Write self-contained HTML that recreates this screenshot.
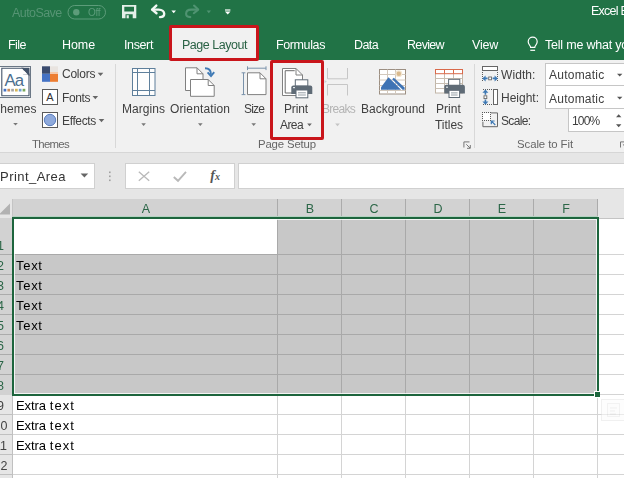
<!DOCTYPE html>
<html><head><meta charset="utf-8"><title>Excel</title>
<style>
html,body{margin:0;padding:0;background:#fff}
#root{position:relative;width:624px;height:478px;overflow:hidden;background:#fff;font-family:"Liberation Sans",sans-serif}
#root div,#root svg{position:absolute}
.t{white-space:nowrap;line-height:16px;height:16px}
.rn{left:-20px;width:41px;text-align:center;font-size:12.5px}
.t{will-change:transform}

</style></head><body>
<div id="root">
<!-- backgrounds -->
<div style="left:0;top:0;width:624px;height:60px;background:#217346"></div>
<div style="left:0;top:60px;width:624px;height:92px;background:#f1f1f1"></div>
<div style="left:0;top:152px;width:624px;height:1px;background:#d6d6d6"></div>
<div style="left:0;top:153px;width:624px;height:46px;background:#e6e6e6"></div>
<!-- page layout tab + red box -->
<div style="left:170px;top:27px;width:88px;height:33px;background:#f1f1f1"></div>
<div style="left:168.5px;top:24.5px;width:84.5px;height:30px;border:3px solid #c9151b;border-radius:2px;z-index:5"></div>
<!-- print area red box -->
<div style="left:270px;top:60px;width:48px;height:73.5px;border:3px solid #c9151b;border-radius:2px;z-index:5"></div>
<!-- ribbon separators -->
<div style="left:115px;top:64px;width:1px;height:84px;background:#d8d8d8"></div>
<div style="left:474px;top:64px;width:1px;height:84px;background:#d8d8d8"></div>
<!-- combo boxes -->
<div style="left:545px;top:63px;width:90px;height:21px;background:#fff;border:1px solid #c6c6c6"></div>
<div style="left:545px;top:85px;width:90px;height:22px;background:#fff;border:1px solid #c6c6c6"></div>
<div style="left:568px;top:108px;width:70px;height:22px;background:#fff;border:1px solid #c6c6c6"></div>
<!-- formula bar boxes -->
<div style="left:-2px;top:163px;width:95px;height:24px;background:#fff;border:1px solid #d0d0d0"></div>
<div style="left:125px;top:163px;width:108px;height:24px;background:#fff;border:1px solid #d0d0d0"></div>
<div style="left:238px;top:163px;width:400px;height:24px;background:#fff;border:1px solid #d0d0d0"></div>
<!-- grid -->
<div id="grid" style="left:0;top:199px;width:624px;height:279px;background:#fff"></div>
<!-- headers -->
<div style="left:0;top:199px;width:624px;height:19px;background:#e6e6e6"></div>
<div style="left:13px;top:199px;width:585px;height:19px;background:#d2d2d2"></div>
<div style="left:0;top:218px;width:13px;height:260px;background:#e6e6e6"></div>
<div style="left:0;top:218px;width:13px;height:177px;background:#d2d2d2"></div>
<div style="left:598px;top:218px;width:26px;height:1px;background:#c4c4c4"></div>
<!-- selection fill -->
<div style="left:13px;top:218px;width:585px;height:177px;background:#c8c8c8"></div>
<div style="left:14px;top:219px;width:263px;height:35px;background:#fff"></div>
<div style="left:277px;top:199px;width:1px;height:18px;background:#ababab"></div>
<div style="left:277px;top:219px;width:1px;height:176px;background:#a9a9a9"></div>
<div style="left:277px;top:396px;width:1px;height:82px;background:#d4d4d4"></div>
<div style="left:341px;top:199px;width:1px;height:18px;background:#ababab"></div>
<div style="left:341px;top:219px;width:1px;height:176px;background:#a9a9a9"></div>
<div style="left:341px;top:396px;width:1px;height:82px;background:#d4d4d4"></div>
<div style="left:405px;top:199px;width:1px;height:18px;background:#ababab"></div>
<div style="left:405px;top:219px;width:1px;height:176px;background:#a9a9a9"></div>
<div style="left:405px;top:396px;width:1px;height:82px;background:#d4d4d4"></div>
<div style="left:469px;top:199px;width:1px;height:18px;background:#ababab"></div>
<div style="left:469px;top:219px;width:1px;height:176px;background:#a9a9a9"></div>
<div style="left:469px;top:396px;width:1px;height:82px;background:#d4d4d4"></div>
<div style="left:533px;top:199px;width:1px;height:18px;background:#ababab"></div>
<div style="left:533px;top:219px;width:1px;height:176px;background:#a9a9a9"></div>
<div style="left:533px;top:396px;width:1px;height:82px;background:#d4d4d4"></div>
<div style="left:597px;top:199px;width:1px;height:18px;background:#ababab"></div>
<div style="left:597px;top:219px;width:1px;height:176px;background:#a9a9a9"></div>
<div style="left:597px;top:396px;width:1px;height:82px;background:#d4d4d4"></div>
<div style="left:12px;top:199px;width:1px;height:18px;background:#c4c4c4"></div>
<div style="left:14px;top:254px;width:583px;height:1px;background:#a9a9a9"></div>
<div style="left:0px;top:254px;width:12px;height:1px;background:#ababab"></div>
<div style="left:599px;top:254px;width:25px;height:1px;background:#d4d4d4"></div>
<div style="left:14px;top:274px;width:583px;height:1px;background:#a9a9a9"></div>
<div style="left:0px;top:274px;width:12px;height:1px;background:#ababab"></div>
<div style="left:599px;top:274px;width:25px;height:1px;background:#d4d4d4"></div>
<div style="left:14px;top:294px;width:583px;height:1px;background:#a9a9a9"></div>
<div style="left:0px;top:294px;width:12px;height:1px;background:#ababab"></div>
<div style="left:599px;top:294px;width:25px;height:1px;background:#d4d4d4"></div>
<div style="left:14px;top:314px;width:583px;height:1px;background:#a9a9a9"></div>
<div style="left:0px;top:314px;width:12px;height:1px;background:#ababab"></div>
<div style="left:599px;top:314px;width:25px;height:1px;background:#d4d4d4"></div>
<div style="left:14px;top:334px;width:583px;height:1px;background:#a9a9a9"></div>
<div style="left:0px;top:334px;width:12px;height:1px;background:#ababab"></div>
<div style="left:599px;top:334px;width:25px;height:1px;background:#d4d4d4"></div>
<div style="left:14px;top:354px;width:583px;height:1px;background:#a9a9a9"></div>
<div style="left:0px;top:354px;width:12px;height:1px;background:#ababab"></div>
<div style="left:599px;top:354px;width:25px;height:1px;background:#d4d4d4"></div>
<div style="left:14px;top:374px;width:583px;height:1px;background:#a9a9a9"></div>
<div style="left:0px;top:374px;width:12px;height:1px;background:#ababab"></div>
<div style="left:599px;top:374px;width:25px;height:1px;background:#d4d4d4"></div>
<div style="left:13px;top:414px;width:611px;height:1px;background:#d4d4d4"></div>
<div style="left:0px;top:414px;width:12px;height:1px;background:#c0c0c0"></div>
<div style="left:13px;top:434px;width:611px;height:1px;background:#d4d4d4"></div>
<div style="left:0px;top:434px;width:12px;height:1px;background:#c0c0c0"></div>
<div style="left:13px;top:454px;width:611px;height:1px;background:#d4d4d4"></div>
<div style="left:0px;top:454px;width:12px;height:1px;background:#c0c0c0"></div>
<div style="left:13px;top:474px;width:611px;height:1px;background:#d4d4d4"></div>
<div style="left:0px;top:474px;width:12px;height:1px;background:#c0c0c0"></div>
<div style="left:12px;top:395px;width:1px;height:83px;background:#c0c0c0"></div>
<div style="left:14px;top:219px;width:581px;height:173px;border:1px solid rgba(255,255,255,0.8)"></div>
<div style="left:13px;top:216px;width:585px;height:1px;background:#b4d3c1"></div>
<div style="left:12px;top:217px;width:587px;height:2px;background:#1d653d"></div>
<div style="left:12px;top:217px;width:2px;height:179px;background:#1d653d"></div>
<div style="left:597px;top:217px;width:2px;height:176px;background:#1d653d"></div>
<div style="left:12px;top:394px;width:583px;height:2px;background:#1d653d"></div>
<div style="left:594px;top:391px;width:5px;height:5px;background:#1d653d;border:1px solid #fff"></div>
<svg style="left:0;top:199px" width="13" height="19"><polygon points="10,4.5 10,15.5 -1,15.5" fill="#b2b2b2"/></svg>
<div style="left:600px;top:394px;width:24px;height:1px;background:#d4d4d4"></div>
<svg id="icons" style="left:0;top:0" width="624" height="478" viewBox="0 0 624 478">
<!-- title bar: autosave toggle -->
<rect x="68" y="5.5" width="37.5" height="13.5" rx="6.75" fill="none" stroke="#5d9c7a" stroke-width="1"/>
<circle cx="76.3" cy="12.2" r="3.2" fill="#5d9c7a"/>
<!-- save icon -->
<g fill="#e4f0e9">
<path d="M122 5h14.3v13.3h-14.3z M124.3 6.8v4.6h9.7v-4.6z M125.5 14.2v4.1h7.2v-4.1z" fill-rule="evenodd"/>
<rect x="126.6" y="15.2" width="2.2" height="3.1" fill="#e4f0e9"/>
</g>
<!-- undo -->
<g fill="none" stroke="#f2f8f4" stroke-width="2.4" stroke-linecap="round" stroke-linejoin="round">
<path d="M152.5 9.6h6.2c3.4 0 5.5 1.9 5.5 4.2s-1.8 3.3-4.2 3.3"/>
<path d="M156.3 5.6l-4.2 4 4.4 3.6"/>
</g>
<polygon points="171.4,10.4 176,10.4 173.7,13.2" fill="#fff"/>
<!-- redo dim -->
<g fill="none" stroke="#4f9371" stroke-width="2.1" stroke-linecap="round" stroke-linejoin="round">
<path d="M197.5 9.6h-6.2c-3.4 0-5.2 1.9-5.2 4.2s1.8 3.3 4.2 3.3"/>
<path d="M194 5.6l4.2 4-4.4 3.6"/>
</g>
<polygon points="206.6,10.4 211,10.4 208.8,13.2" fill="#4f9371"/>
<!-- customize qat -->
<rect x="225" y="9.4" width="5.4" height="1.2" fill="#fff"/>
<polygon points="224.9,11.6 230.5,11.6 227.7,14.5" fill="#fff"/>
<!-- bulb -->
<g fill="none" stroke="#fff" stroke-width="1.2">
<path d="M530.6 47.3c0-1.6-2.4-2.9-2.4-5.6a4.5 4.5 0 0 1 9 0c0 2.7-2.4 4-2.4 5.600z"/>
<path d="M530.3 50.300h4.800"/>
</g>

<!-- THEMES icon -->
<rect x="-0.5" y="66.5" width="31" height="31" fill="#fff" stroke="#6b7785" stroke-width="1"/>
<path d="M1.8 68.3h21.4l5.8 5.8v21.7h-27.2z" fill="#fff" stroke="#44546a" stroke-width="1.1"/>
<path d="M23.2 68.3l5.8 5.8h-5.8z" fill="#fff" stroke="#44546a" stroke-width="0.9"/>
<path d="M21 67.8h8.5v8.5z" fill="#44546a"/>
<path d="M21.8 68.6v5.9h5.9z" fill="#fff"/>
<text x="4.4" y="86" font-family="Liberation Sans, sans-serif" font-size="16.8" fill="#4b6f8f" letter-spacing="-0.9">Aa</text>
<g>
<rect x="3.6" y="88.8" width="2.7" height="2.7" fill="#4472c4"/>
<rect x="7.4" y="88.8" width="2.7" height="2.7" fill="#c98a5a"/>
<rect x="11.2" y="88.8" width="2.7" height="2.7" fill="#a5a5a5"/>
<rect x="15" y="88.8" width="2.7" height="2.7" fill="#d6b656"/>
<rect x="18.8" y="88.8" width="2.7" height="2.7" fill="#6fa0cf"/>
<rect x="22.6" y="88.8" width="2.7" height="2.7" fill="#78a85a"/>
</g>
<polygon points="13.2,122.9 17.8,122.9 15.5,125.6" fill="#777"/>
<!-- colors icon -->
<rect x="42" y="66.3" width="8" height="7.5" fill="#3a4b6e"/>
<rect x="50" y="66.3" width="8" height="7.5" fill="#e9e4e0"/>
<rect x="42" y="73.8" width="8" height="8" fill="#4472c4"/>
<rect x="50" y="73.8" width="8" height="8" fill="#ed7d31"/>
<rect x="50" y="72" width="8" height="1.8" fill="#f6c9a8"/>
<!-- fonts icon -->
<rect x="42.5" y="89.5" width="15" height="15" fill="#fff" stroke="#5a5a5a"/>
<text x="50" y="101.2" text-anchor="middle" font-family="Liberation Sans, sans-serif" font-size="11" fill="#333">A</text>
<!-- effects icon -->
<rect x="42.5" y="112.5" width="15" height="15" fill="#fff" stroke="#5a5a5a"/>
<circle cx="50" cy="120" r="5.7" fill="#8faadc" stroke="#4f74b8" stroke-width="0.9"/>
<!-- small arrows colors/fonts/effects -->
<polygon points="97.7,72.8 103.3,72.8 100.5,76.1" fill="#666"/>
<polygon points="92.5,96 98.1,96 95.3,99.3" fill="#666"/>
<polygon points="98.7,118.9 104.3,118.9 101.5,122.2" fill="#666"/>

<!-- MARGINS icon -->
<g fill="none" stroke="#5e7f9b" stroke-width="1">
<rect x="132.5" y="68.5" width="22.5" height="27" fill="#fdfdfd"/>
<path d="M137.5 68.5v27M149.5 68.5v27M132.5 72.5h22.5M132.5 90.5h22.5"/>
</g>
<polygon points="141.3,123.3 145.9,123.3 143.6,126" fill="#777"/>
<!-- ORIENTATION icon -->
<g fill="#fff" stroke="#808080" stroke-width="1">
<path d="M185.5 67.8h11.5l6 6v16.7h-17.5z"/>
<path d="M197 67.8v6h6" fill="none"/>
<path d="M190.5 79.5h17.7l6 6v10.8h-23.7z"/>
<path d="M208.2 79.5v6h6" fill="none"/>
</g>
<g fill="none" stroke="#3f7ab5" stroke-width="1.9">
<path d="M205 68.2c4.2 0 6 2.4 6 6.2"/>
<path d="M207.6 72.4l3.4 3.6 3.2-3.8"/>
</g>
<polygon points="198,123.3 202.6,123.3 200.3,126" fill="#777"/>
<!-- SIZE icon -->
<g fill="#fff" stroke="#808080" stroke-width="1">
<path d="M247.5 72.8h12.5l6 6v15.8h-18.5z"/>
<path d="M260 72.8v6h6" fill="none"/>
</g>
<g fill="none" stroke="#7a92aa" stroke-width="1">
<path d="M247.5 68.2h18.5M247.5 66.3v3.8M266 66.3v3.8"/>
<path d="M243.5 72.8v22M241.6 72.8h3.8M241.6 94.6h3.8"/>
</g>
<polygon points="251.4,123.3 256,123.3 253.7,126" fill="#777"/>
<!-- PRINT AREA icon -->
<g fill="#fff" stroke="#808080" stroke-width="1">
<path d="M282.5 68.5h13.5l6.5 6.5v20.5h-20z"/>
<path d="M296 68.5v6.5h6.5" fill="none"/>
<path d="M292 93h-6.8v-22.3h9.5" fill="none" stroke="#6a6a6a"/>
</g>
<g>
<rect x="295.3" y="79.8" width="12.5" height="6.4" fill="#fff" stroke="#5f6b76" stroke-width="1"/>
<path d="M291.3 87.5a2 2 0 0 1 2-2h17a2 2 0 0 1 2 2v6.5h-21z" fill="#5f6b76"/>
<rect x="296" y="90" width="11.8" height="7.8" fill="#fff" stroke="#5f6b76" stroke-width="1"/>
<path d="M298 92.8h7.8M298 95h7.8" stroke="#8a949c" stroke-width="0.9"/>
<rect x="293" y="87" width="2" height="1.2" fill="#dfe4e8"/>
</g>
<polygon points="307.2,123.5 311.8,123.5 309.5,126.2" fill="#666"/>
<!-- BREAKS icon (dim) -->
<g fill="none" stroke="#c6c6c6" stroke-width="1">
<path d="M327.5 68v10.8h20v-10.8"/>
<path d="M327.5 95.5v-11h20v11"/>
</g>
<polygon points="324.5,80 326.8,81.6 324.5,83.2" fill="#c9cfd6"/>
<polygon points="335.2,123.5 339.8,123.5 337.5,126.2" fill="#c4c4c4"/>
<!-- BACKGROUND icon -->
<g>
<rect x="379.500" y="69.5" width="26" height="24.5" fill="#fff" stroke="#9c8f82" stroke-width="1"/>
<path d="M387.5 69.5v24.5M395.5 69.5v24.5M379.5 74.500h26M379.5 80h26M379.5 85.500h26M379.5 90.500h26" stroke="#d2c8bc" stroke-width="1" fill="none"/>
<circle cx="398.8" cy="73.700" r="3.400" fill="#f3e6d2"/>
<circle cx="398.8" cy="73.700" r="2.200" fill="#d9b98c"/>
<path d="M381 89.700v-2.400l7.500-10.100 12.600 12.500z" fill="#3f74b5"/>
<path d="M392.200 79.300l1.600-1.500 10.800 9.800v2.100h-2z" fill="#3f74b5"/>
</g>
<!-- PRINT TITLES icon -->
<g>
<rect x="435.5" y="69.5" width="27" height="23.5" fill="#fff" stroke="#c2b6a8" stroke-width="1"/>
<path d="M444.5 69.5v23.5M453.5 69.5v23.5M435.5 78.500h27M435.5 83.500h27M435.5 88.500h27" stroke="#c9bfb3" stroke-width="1" fill="none"/>
<rect x="435.5" y="69.5" width="27" height="4.200" fill="#fff" stroke="#d9694a" stroke-width="1"/>
<path d="M444.5 69.5v4.200M453.5 69.5v4.200" stroke="#d9694a" stroke-width="1"/>
<rect x="448.6" y="79.300" width="11.2" height="6.800" fill="#fff" stroke="#5f6b76" stroke-width="1"/>
<path d="M444.300 86.800a2 2 0 0 1 2-2h16.600a2 2 0 0 1 2 2v6.600h-20.600z" fill="#5f6b76"/>
<rect x="449" y="90.300" width="10.600" height="7.200" fill="#fff" stroke="#5f6b76" stroke-width="1"/>
<path d="M451 92.900h6.600M451 95h6.600" stroke="#8a949c" stroke-width="0.9"/>
<rect x="446" y="86.600" width="2" height="1.200" fill="#dfe4e8"/>
</g>
<!-- dialog launchers -->
<g fill="none" stroke="#777" stroke-width="1">
<path d="M463.9 147.5v-5.6h5.6"/>
<path d="M466.3 144.3l3.7 3.7M470.3 145v3.3h-3.3"/>
</g>
<g fill="none" stroke="#777" stroke-width="1">
<path d="M620.5 147.5v-5.6h5.6"/>
<path d="M622.9 144.3l3.7 3.7"/>
</g>
<!-- WIDTH icon -->
<rect x="482.5" y="66.5" width="15" height="4" fill="#fff" stroke="#666"/>
<rect x="482" y="72" width="1" height="1" fill="#5a5a5a"/><rect x="482" y="74" width="1" height="1" fill="#5a5a5a"/><rect x="482" y="76" width="1" height="1" fill="#5a5a5a"/><rect x="482" y="78" width="1" height="1" fill="#5a5a5a"/><rect x="482" y="80" width="1" height="1" fill="#5a5a5a"/><rect x="497" y="72" width="1" height="1" fill="#5a5a5a"/><rect x="497" y="74" width="1" height="1" fill="#5a5a5a"/><rect x="497" y="76" width="1" height="1" fill="#5a5a5a"/><rect x="497" y="78" width="1" height="1" fill="#5a5a5a"/><rect x="497" y="80" width="1" height="1" fill="#5a5a5a"/>
<g fill="#3f7ab5">
<polygon points="482.3,78.4 485.6,75.4 485.6,77.6 487.6,77.6 487.6,79.2 485.6,79.2 485.6,81.4"/>
<polygon points="497.9,78.4 494.6,75.4 494.6,77.6 492.6,77.6 492.6,79.2 494.6,79.2 494.6,81.4"/>
</g>
<rect x="488.7" y="77" width="2.8" height="2.8" fill="#fff" stroke="#666" stroke-width="0.9"/>
<!-- HEIGHT icon -->
<rect x="493.5" y="89.5" width="4" height="15" fill="#fff" stroke="#666"/>
<rect x="483" y="89" width="1" height="1" fill="#5a5a5a"/><rect x="485" y="89" width="1" height="1" fill="#5a5a5a"/><rect x="487" y="89" width="1" height="1" fill="#5a5a5a"/><rect x="489" y="89" width="1" height="1" fill="#5a5a5a"/><rect x="491" y="89" width="1" height="1" fill="#5a5a5a"/><rect x="483" y="104" width="1" height="1" fill="#5a5a5a"/><rect x="485" y="104" width="1" height="1" fill="#5a5a5a"/><rect x="487" y="104" width="1" height="1" fill="#5a5a5a"/><rect x="489" y="104" width="1" height="1" fill="#5a5a5a"/><rect x="491" y="104" width="1" height="1" fill="#5a5a5a"/>
<g fill="#3f7ab5">
<polygon points="485.4,89.4 482.4,92.7 484.6,92.7 484.6,94.7 486.2,94.7 486.2,92.7 488.4,92.7"/>
<polygon points="485.4,104.8 482.4,101.5 484.6,101.5 484.6,99.5 486.2,99.5 486.2,101.5 488.4,101.5"/>
</g>
<rect x="484" y="95.8" width="2.8" height="2.8" fill="#fff" stroke="#666" stroke-width="0.9"/>
<!-- SCALE icon -->
<path d="M491 112.9h6.5v13.8h-14.6v-5" fill="none" stroke="#666" stroke-width="1"/>
<rect x="483" y="113" width="7" height="7" fill="#fff"/><rect x="482" y="112" width="1" height="1" fill="#5a5a5a"/><rect x="484" y="112" width="1" height="1" fill="#5a5a5a"/><rect x="486" y="112" width="1" height="1" fill="#5a5a5a"/><rect x="488" y="112" width="1" height="1" fill="#5a5a5a"/><rect x="490" y="112" width="1" height="1" fill="#5a5a5a"/><rect x="482" y="120" width="1" height="1" fill="#5a5a5a"/><rect x="484" y="120" width="1" height="1" fill="#5a5a5a"/><rect x="486" y="120" width="1" height="1" fill="#5a5a5a"/><rect x="488" y="120" width="1" height="1" fill="#5a5a5a"/><rect x="490" y="120" width="1" height="1" fill="#5a5a5a"/><rect x="482" y="114" width="1" height="1" fill="#5a5a5a"/><rect x="482" y="116" width="1" height="1" fill="#5a5a5a"/><rect x="482" y="118" width="1" height="1" fill="#5a5a5a"/><rect x="490" y="114" width="1" height="1" fill="#5a5a5a"/><rect x="490" y="116" width="1" height="1" fill="#5a5a5a"/><rect x="490" y="118" width="1" height="1" fill="#5a5a5a"/>
<g stroke="#3f7ab5" stroke-width="1.2" fill="none">
<path d="M495.3 125l-3.6-3.6M491.3 124.3v-3.3h3.3"/>
</g>
<!-- combo arrows -->
<polygon points="617,73.8 622.4,73.8 619.7,76.6" fill="#555"/>
<polygon points="617,96.8 622.4,96.8 619.7,99.6" fill="#555"/>
<polygon points="616,117.2 621.4,117.2 618.7,114.2" fill="#555"/>
<polygon points="616,124.3 621.4,124.3 618.7,127.2" fill="#555"/>
<!-- name box arrow -->
<polygon points="80.6,173.4 88.2,173.4 84.4,177.4" fill="#666"/>
<!-- dots -->
<g fill="#a0a0a0">
<rect x="109" y="171.5" width="1.6" height="1.6"/>
<rect x="109" y="175.5" width="1.6" height="1.6"/>
<rect x="109" y="179.5" width="1.6" height="1.6"/>
</g>
<!-- X / check -->
<path d="M138.8 171.8l10.4 9M149.2 171.8l-10.4 9" stroke="#b9b9b9" stroke-width="1.3" fill="none"/>
<path d="M173.8 177l4.2 3.8 8-9" stroke="#b9b9b9" stroke-width="1.9" fill="none"/>
<text x="210.3" y="180" font-family="Liberation Serif, serif" font-style="italic" font-weight="bold" font-size="14" fill="#555">f</text>
<text x="215" y="180.3" font-family="Liberation Serif, serif" font-style="italic" font-weight="bold" font-size="10" fill="#555">x</text>
<!-- quick analysis faint -->
<g opacity="0.55">
<rect x="601.5" y="399.5" width="24" height="21" fill="#fcfcfc" stroke="#e4e4e4"/>
<rect x="607.5" y="403.5" width="12" height="13" fill="#fafafa" stroke="#e9e9e9"/>
<path d="M610 408h7M610 411h5M610 414h6" stroke="#e3e3e3" stroke-width="1"/>
</g>
</svg>

<div class="t" id="t0" style="left:11.5px;top:5.0px;color:#569474;font-size:12.5px;letter-spacing:-0.565px">AutoSave</div>
<div class="t" id="t1" style="left:87.5px;top:4.5px;color:#5c9c7b;font-size:10px;letter-spacing:-0.285px">Off</div>
<div class="t" id="t2" style="left:591px;top:3.0px;color:#fff;font-size:12.5px;letter-spacing:-0.770px">Excel B</div>
<div class="t" id="t3" style="left:8px;top:37.0px;color:#fff;font-size:12.5px;letter-spacing:-0.539px">File</div>
<div class="t" id="t4" style="left:62px;top:37.0px;color:#fff;font-size:12.5px;letter-spacing:-0.086px">Home</div>
<div class="t" id="t5" style="left:124px;top:37.0px;color:#fff;font-size:12.5px;letter-spacing:-0.378px">Insert</div>
<div class="t" id="t6" style="left:276px;top:37.0px;color:#fff;font-size:12.5px;letter-spacing:-0.387px">Formulas</div>
<div class="t" id="t7" style="left:354px;top:37.0px;color:#fff;font-size:12.5px;letter-spacing:-0.602px">Data</div>
<div class="t" id="t8" style="left:407px;top:37.0px;color:#fff;font-size:12.5px;letter-spacing:-0.667px">Review</div>
<div class="t" id="t9" style="left:472px;top:37.0px;color:#fff;font-size:12.5px;letter-spacing:-0.219px">View</div>
<div class="t" id="t10" style="left:182px;top:37.0px;color:#2a6245;font-size:12.5px;letter-spacing:-0.473px">Page Layout</div>
<div class="t" id="t11" style="left:545px;top:37.0px;color:#fff;font-size:12.5px;letter-spacing:-0.210px">Tell me what you want to do</div>
<div class="t" id="t12" style="left:-7.4px;top:100.5px;color:#404040;font-size:12px;letter-spacing:0.007px">Themes</div>
<div class="t" id="t13" style="left:61.6px;top:66.3px;color:#404040;font-size:12px;letter-spacing:-0.248px">Colors</div>
<div class="t" id="t14" style="left:61.6px;top:89.5px;color:#404040;font-size:12px;letter-spacing:-0.383px">Fonts</div>
<div class="t" id="t15" style="left:61.6px;top:112.5px;color:#404040;font-size:12px;letter-spacing:-0.367px">Effects</div>
<div class="t" id="t16" style="left:32px;top:135.9px;color:#666;font-size:11.4px;letter-spacing:-0.693px">Themes</div>
<div class="t" id="t17" style="left:122px;top:100.5px;color:#404040;font-size:12px;letter-spacing:0.045px">Margins</div>
<div class="t" id="t18" style="left:170px;top:100.5px;color:#404040;font-size:12px;letter-spacing:0.118px">Orientation</div>
<div class="t" id="t19" style="left:244px;top:100.5px;color:#404040;font-size:12px;letter-spacing:-0.836px">Size</div>
<div class="t" id="t20" style="left:284px;top:100.5px;color:#404040;font-size:12px;letter-spacing:-0.138px">Print</div>
<div class="t" id="t21" style="left:280px;top:116.7px;color:#404040;font-size:12px;letter-spacing:-0.590px">Area</div>
<div class="t" id="t22" style="left:322px;top:100.5px;color:#b4b4b4;font-size:12px;letter-spacing:-0.727px">Breaks</div>
<div class="t" id="t23" style="left:361px;top:100.5px;color:#404040;font-size:12px;letter-spacing:-0.005px">Background</div>
<div class="t" id="t24" style="left:436px;top:100.5px;color:#404040;font-size:12px;letter-spacing:0.062px">Print</div>
<div class="t" id="t25" style="left:435px;top:116.7px;color:#404040;font-size:12px;letter-spacing:-0.039px">Titles</div>
<div class="t" id="t26" style="left:258px;top:135.9px;color:#666;font-size:11.4px;letter-spacing:-0.155px">Page Setup</div>
<div class="t" id="t27" style="left:501px;top:66.8px;color:#404040;font-size:12px;letter-spacing:0.081px">Width:</div>
<div class="t" id="t28" style="left:501px;top:90.0px;color:#404040;font-size:12px;letter-spacing:-0.004px">Height:</div>
<div class="t" id="t29" style="left:501px;top:112.5px;color:#404040;font-size:12px;letter-spacing:-0.643px">Scale:</div>
<div class="t" id="t30" style="left:548.5px;top:67.2px;color:#404040;font-size:12px;letter-spacing:0.238px">Automatic</div>
<div class="t" id="t31" style="left:548.5px;top:90.5px;color:#404040;font-size:12px;letter-spacing:0.238px">Automatic</div>
<div class="t" id="t32" style="left:572px;top:112.6px;color:#404040;font-size:12px;letter-spacing:-0.851px">100%</div>
<div class="t" id="t33" style="left:517px;top:135.9px;color:#666;font-size:11.4px;letter-spacing:-0.082px">Scale to Fit</div>
<div class="t" id="t34" style="left:0px;top:168.5px;color:#333;font-size:13px;letter-spacing:0.458px">Print_Area</div>
<div class="t" id="t35" style="left:132px;width:28px;text-align:center;top:201.0px;color:#2b6647;font-size:12.5px">A</div>
<div class="t" id="t36" style="left:296px;width:28px;text-align:center;top:201.0px;color:#2b6647;font-size:12.5px">B</div>
<div class="t" id="t37" style="left:360px;width:28px;text-align:center;top:201.0px;color:#2b6647;font-size:12.5px">C</div>
<div class="t" id="t38" style="left:424px;width:28px;text-align:center;top:201.0px;color:#2b6647;font-size:12.5px">D</div>
<div class="t" id="t39" style="left:488px;width:28px;text-align:center;top:201.0px;color:#2b6647;font-size:12.5px">E</div>
<div class="t" id="t40" style="left:552px;width:28px;text-align:center;top:201.0px;color:#2b6647;font-size:12.5px">F</div>
<div class="t" id="t41" style="left:16.3px;top:257.5px;color:#000;font-size:13px;letter-spacing:0.714px">Text</div>
<div class="t" id="t42" style="left:16.3px;top:277.5px;color:#000;font-size:13px;letter-spacing:0.714px">Text</div>
<div class="t" id="t43" style="left:16.3px;top:297.5px;color:#000;font-size:13px;letter-spacing:0.714px">Text</div>
<div class="t" id="t44" style="left:16.3px;top:317.5px;color:#000;font-size:13px;letter-spacing:0.714px">Text</div>
<div class="t" style="left:16.4px;top:397.5px;color:#000;font-size:13px;letter-spacing:-0.12px;word-spacing:0.6px">Extra <span style="letter-spacing:1px">text</span></div>
<div class="t" style="left:16.4px;top:417.5px;color:#000;font-size:13px;letter-spacing:-0.12px;word-spacing:0.6px">Extra <span style="letter-spacing:1px">text</span></div>
<div class="t" style="left:16.4px;top:437.5px;color:#000;font-size:13px;letter-spacing:-0.12px;word-spacing:0.6px">Extra <span style="letter-spacing:1px">text</span></div>
<div class="t rn" style="top:238px;color:#2b6647">1</div>
<div class="t rn" style="top:258px;color:#2b6647">2</div>
<div class="t rn" style="top:278px;color:#2b6647">3</div>
<div class="t rn" style="top:298px;color:#2b6647">4</div>
<div class="t rn" style="top:318px;color:#2b6647">5</div>
<div class="t rn" style="top:338px;color:#2b6647">6</div>
<div class="t rn" style="top:358px;color:#2b6647">7</div>
<div class="t rn" style="top:378px;color:#2b6647">8</div>
<div class="t rn" style="top:398px;color:#444">9</div>
<div class="t rn" style="top:418px;color:#444">10</div>
<div class="t rn" style="top:438px;color:#444">11</div>
<div class="t rn" style="top:458px;color:#444">12</div>
</div>
</body></html>
